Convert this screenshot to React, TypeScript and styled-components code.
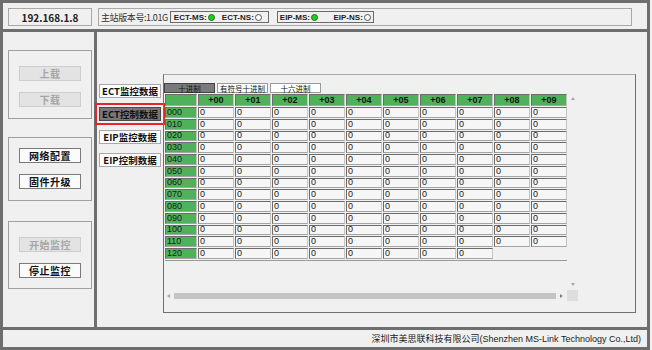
import React from 'react';
import styled, { createGlobalStyle, css } from 'styled-components';

const GlobalStyle = createGlobalStyle`
  html, body { margin: 0; padding: 0; background: #f0f0f0; }
  body { font-family: "Noto Sans CJK SC", "Noto Sans", sans-serif; }
  * { box-sizing: border-box; }
`;

const CJK = `"Noto Sans CJK SC", "Noto Sans", sans-serif`;
const LATIN = `"Liberation Sans", "Noto Sans CJK SC", sans-serif`;

const Frame = styled.div`
  width: 650px;
  height: 350px;
  border: 3px solid #6e6e6e;
  background: #f0f0f0;
  display: flex;
  flex-direction: column;
`;

const Header = styled.div`
  height: 29px;
  border-bottom: 3px solid #6e6e6e;
  display: flex;
  align-items: flex-start;
  gap: 6px;
  padding: 5px 0 0 5px;
`;

const IpBox = styled.div`
  width: 84px;
  height: 18px;
  border: 1px solid #a8a8a8;
  display: flex;
  align-items: center;
  justify-content: center;
  font-family: ${CJK};
  font-weight: 700;
  font-size: 10px;
  color: #222;
`;

const InfoBox = styled.div`
  width: 534px;
  height: 18px;
  border: 1px solid #a8a8a8;
  display: flex;
  align-items: center;
  padding-left: 2px;
  gap: 8px;
`;

const Version = styled.span`
  font-family: ${CJK};
  font-size: 9px;
  letter-spacing: -0.4px;
  color: #333;
  margin-right: -6px;
  white-space: nowrap;
`;

const StatusGroup = styled.div<{ $w: number; $pad: string }>`
  width: ${p => p.$w}px;
  height: 12px;
  border: 1px solid #6a6a6a;
  display: flex;
  align-items: center;
  justify-content: space-between;
  padding: ${p => p.$pad};
`;

const StatusItem = styled.span`
  display: flex;
  align-items: center;
  gap: 1px;
  font-family: ${LATIN};
  font-weight: 700;
  font-size: 8px;
  color: #222;
`;

const Led = styled.span<{ $on?: boolean }>`
  width: 7px;
  height: 7px;
  border-radius: 50%;
  border: 1px solid ${p => (p.$on ? '#2a6a2a' : '#555')};
  background: ${p => (p.$on ? '#19d219' : '#fff')};
`;

const Body = styled.div`
  flex: 1;
  display: flex;
  min-height: 0;
`;

const Sidebar = styled.div`
  width: 94px;
  border-right: 3px solid #6e6e6e;
  padding: 18px 0 0 5px;
  display: flex;
  flex-direction: column;
`;

const GroupBox = styled.div<{ $pad: string; $mb: number }>`
  width: 84px;
  border: 1px solid #a0a0a0;
  padding: ${p => p.$pad};
  margin-bottom: ${p => p.$mb}px;
  display: flex;
  flex-direction: column;
  align-items: center;
  gap: 11px;
`;

const SideButton = styled.div<{ $disabled?: boolean }>`
  width: 62px;
  height: 15px;
  display: flex;
  align-items: center;
  justify-content: center;
  font-family: ${CJK};
  font-weight: 700;
  font-size: 10px;
  letter-spacing: 0.5px;
  ${p =>
    p.$disabled
      ? css`
          background: #e3e3e3;
          border: 1px solid #cdcdcd;
          color: #a6a6a6;
        `
      : css`
          background: #fbfbfb;
          border: 1px solid #7a7a7a;
          color: #111;
        `}
`;

const Main = styled.div`
  flex: 1;
  display: flex;
  align-items: flex-start;
  padding: 42px 0 0 2px;
`;

const ViewList = styled.div`
  width: 64px;
  padding-top: 10px;
  display: flex;
  flex-direction: column;
  gap: 9px;
`;

const ViewButton = styled.div<{ $active?: boolean }>`
  width: 62px;
  height: 14px;
  display: flex;
  align-items: center;
  justify-content: center;
  font-family: ${CJK};
  font-weight: 700;
  font-size: 9.5px;
  color: #111;
  white-space: nowrap;
  border: 1px solid ${p => (p.$active ? '#4a4a4a' : '#a8a8a8')};
  background: ${p => (p.$active ? '#777777' : '#fdfdfd')};
  ${p =>
    p.$active &&
    css`
      outline: 2px solid #e5232a;
      outline-offset: 2px;
    `}
`;

const DataPanel = styled.div`
  width: 473px;
  height: 239px;
  border: 1px solid #707070;
  border-top-color: #a8a8a8;
  padding-top: 8px;
  display: flex;
  flex-direction: column;
`;

const FormatTabs = styled.div`
  display: flex;
  gap: 2px;
  height: 10px;
  margin-bottom: 1px;
`;

const FormatTab = styled.div<{ $active?: boolean }>`
  width: 51px;
  height: 10px;
  display: flex;
  align-items: center;
  justify-content: center;
  font-family: ${CJK};
  font-size: 7.5px;
  color: #111;
  border: 1px solid ${p => (p.$active ? '#444' : '#9a9a9a')};
  background: ${p => (p.$active ? '#7a7a7a' : '#fff')};
`;

const ScrollArea = styled.div`
  display: grid;
  grid-template-columns: 403px 11px;
  grid-template-rows: 196px 11px;
`;

const TableWrap = styled.div`
  padding-left: 1px;
`;

const Table = styled.div`
  display: grid;
  grid-template-columns: 32px repeat(10, 36px);
  grid-template-rows: 12px;
  grid-auto-rows: 10.75px;
  column-gap: 1px;
  row-gap: 1px;
  border-bottom: 1px solid #9a9a9a;
  padding-bottom: 1px;
`;

const Cell = styled.div<{ $kind: 'head' | 'label' | 'value' }>`
  font-family: ${LATIN};
  font-size: 9px;
  line-height: 1;
  color: #1a1a1a;
  display: flex;
  align-items: center;
  padding-left: 1px;
  border-top: 1px solid #6c6c6c;
  border-left: 1px solid #6c6c6c;
  border-right: 1px solid #c4c4c4;
  border-bottom: 1px solid #a4a4a4;
  background: ${p => (p.$kind === 'value' ? '#f6f6f6' : '#4fb25b')};
  ${p =>
    p.$kind === 'head' &&
    css`
      justify-content: center;
      font-weight: 700;
      padding-left: 0;
      color: #111;
    `}
`;

const VScroll = styled.div`
  display: flex;
  flex-direction: column;
  justify-content: space-between;
  align-items: center;
  padding: 3px 0 4px;
`;

const HScroll = styled.div`
  display: flex;
  align-items: center;
  padding: 0 4px 0 3px;
  gap: 4px;
`;

const Thumb = styled.div`
  flex: 1;
  height: 6px;
  background: #c4c4c4;
`;

const Arrow = styled.span<{ $dir: 'up' | 'down' | 'left' | 'right' }>`
  width: 0;
  height: 0;
  border: 2px solid transparent;
  ${p =>
    p.$dir === 'up'
      ? css`border-bottom: 3px solid #a8a8a8; border-top-width: 0;`
      : p.$dir === 'down'
      ? css`border-top: 3px solid #a8a8a8; border-bottom-width: 0;`
      : p.$dir === 'left'
      ? css`border-right: 3px solid #a8a8a8; border-left-width: 0;`
      : css`border-left: 3px solid #808080; border-right-width: 0;`}
`;

const Corner = styled.div`
  background: #dedede;
`;

const StatusBar = styled.div`
  height: 20px;
  border-top: 3px solid #6e6e6e;
  display: flex;
  align-items: center;
  justify-content: flex-end;
  padding-right: 6px;
  font-family: ${LATIN};
  font-size: 9px;
  color: #222;
`;

const columns = Array.from({ length: 10 }, (_, i) => `+0${i}`);
const rows = Array.from({ length: 13 }, (_, i) => String(i * 10).padStart(3, '0'));
const TOTAL = 128;

export default function App() {
  return (
    <>
      <GlobalStyle />
      <Frame>
        <Header>
          <IpBox>192.168.1.8</IpBox>
          <InfoBox>
            <Version>主站版本号:1.01G</Version>
            <StatusGroup $w={99} $pad="0 6px 0 3px">
              <StatusItem>ECT-MS:<Led $on /></StatusItem>
              <StatusItem>ECT-NS:<Led /></StatusItem>
            </StatusGroup>
            <StatusGroup $w={97} $pad="0 2px 0 2px">
              <StatusItem>EIP-MS:<Led $on /></StatusItem>
              <StatusItem>EIP-NS:<Led /></StatusItem>
            </StatusGroup>
          </InfoBox>
        </Header>

        <Body>
          <Sidebar>
            <GroupBox $pad="15px 0 11px" $mb={18}>
              <SideButton $disabled>上载</SideButton>
              <SideButton $disabled>下载</SideButton>
            </GroupBox>
            <GroupBox $pad="10px 0 11px" $mb={20}>
              <SideButton>网络配置</SideButton>
              <SideButton>固件升级</SideButton>
            </GroupBox>
            <GroupBox $pad="15px 0 10px" $mb={0}>
              <SideButton $disabled>开始监控</SideButton>
              <SideButton>停止监控</SideButton>
            </GroupBox>
          </Sidebar>

          <Main>
            <ViewList>
              <ViewButton>ECT监控数据</ViewButton>
              <ViewButton $active>ECT控制数据</ViewButton>
              <ViewButton>EIP监控数据</ViewButton>
              <ViewButton>EIP控制数据</ViewButton>
            </ViewList>

            <DataPanel>
              <FormatTabs>
                <FormatTab $active>十进制</FormatTab>
                <FormatTab>有符号十进制</FormatTab>
                <FormatTab>十六进制</FormatTab>
              </FormatTabs>
              <ScrollArea>
                <TableWrap>
                  <Table>
                    <Cell $kind="head" />
                    {columns.map(c => (
                      <Cell key={c} $kind="head">{c}</Cell>
                    ))}
                    {rows.map((r, ri) => (
                      <React.Fragment key={r}>
                        <Cell $kind="label">{r}</Cell>
                        {columns.map((c, ci) =>
                          ri * 10 + ci < TOTAL ? (
                            <Cell key={c} $kind="value">0</Cell>
                          ) : null
                        )}
                      </React.Fragment>
                    ))}
                  </Table>
                </TableWrap>
                <VScroll>
                  <Arrow $dir="up" />
                  <Arrow $dir="down" />
                </VScroll>
                <HScroll>
                  <Arrow $dir="left" />
                  <Thumb />
                  <Arrow $dir="right" />
                </HScroll>
                <Corner />
              </ScrollArea>
            </DataPanel>
          </Main>
        </Body>

        <StatusBar>深圳市美思联科技有限公司(Shenzhen MS-Link Technology Co.,Ltd)</StatusBar>
      </Frame>
    </>
  );
}
